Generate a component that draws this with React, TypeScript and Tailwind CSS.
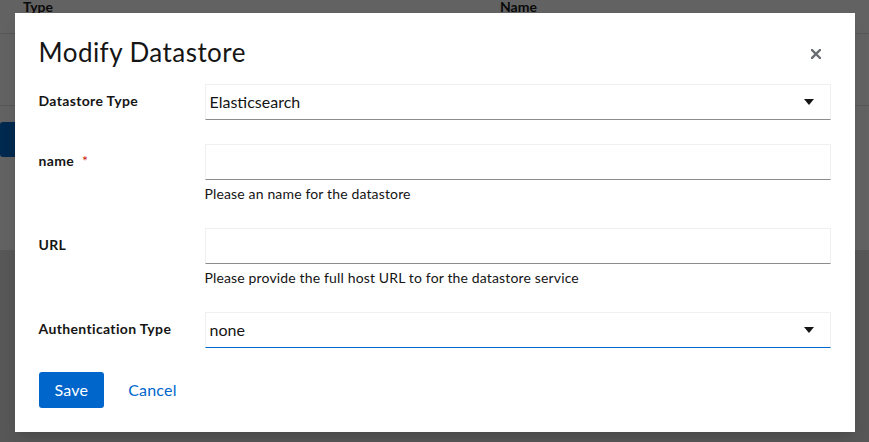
import React from "react";

const font = { fontFamily: "Lato, 'Noto Sans', sans-serif" };

function Caret() {
  return (
    <svg width="10" height="6" viewBox="0 0 10 6" className="shrink-0">
      <path d="M0 0 H10 L5 6 Z" fill="#151515" />
    </svg>
  );
}

function SelectBox({ value, focused }: { value: string; focused?: boolean }) {
  return (
    <div
      className={`flex h-9 items-center justify-between border border-[#f0f0f0] pl-[4px] pr-[16px] ${
        focused ? "border-b-[#0066cc]" : "border-b-[#8a8d90]"
      }`}
    >
      <span className="text-base text-[#151515]">{value}</span>
      <Caret />
    </div>
  );
}

function TextBox() {
  return <div className="h-9 border border-[#f0f0f0] border-b-[#8a8d90]" />;
}

function Row({
  label,
  required,
  helper,
  children,
}: {
  label: string;
  required?: boolean;
  helper?: string;
  children: React.ReactNode;
}) {
  return (
    <div className="grid grid-cols-[166px_1fr]">
      <div className="pt-[6px] text-sm font-bold leading-[21px] tracking-[0.35px] text-[#151515]">
        {label}
        {required && <span className="ml-[8px] font-normal text-[#c9190b]">*</span>}
      </div>
      <div>
        {children}
        {helper && (
          <p className="mt-1 text-sm leading-5 tracking-[0.15px] text-[#151515]">{helper}</p>
        )}
      </div>
    </div>
  );
}

export default function App() {
  return (
    <div className="relative h-[442px] w-full overflow-hidden bg-[#575757]" style={font}>
      {/* dimmed page behind the modal */}
      <div className="bg-[#626262]">
        <div className="flex h-[34px] border-b border-[#575757] text-sm font-bold text-[#0a0a0a]">
          <span className="-mt-[3px] ml-[23px] w-[477px]">Type</span>
          <span className="-mt-[3px]">Name</span>
        </div>
        <div className="h-[72px] border-b border-[#575757]" />
        <div className="h-[145px] border-b border-[#575757] pt-[16px]">
          <div className="h-[35px] w-[40px] rounded-[3px] bg-[#00294f]" />
        </div>
      </div>

      {/* modal */}
      <div className="absolute inset-0 flex justify-center pt-[13px]">
        <div className="h-[419px] w-[840px] bg-white px-6 pt-6 shadow-lg">
          <div className="flex items-start justify-between">
            <h1 className="text-[26px] leading-[31px] tracking-[0.45px] text-[#151515]">Modify Datastore</h1>
            <button className="mr-[10px] mt-[12px]">
              <svg width="10" height="10" viewBox="0 0 10 10">
                <path d="M1 1 L9 9 M9 1 L1 9" stroke="#6a6e73" strokeWidth="2.4" strokeLinecap="square" />
              </svg>
            </button>
          </div>

          <div className="mt-4 flex flex-col gap-6">
            <Row label="Datastore Type">
              <SelectBox value="Elasticsearch" />
            </Row>
            <Row label="name" required helper="Please an name for the datastore">
              <TextBox />
            </Row>
            <Row label="URL" helper="Please provide the full host URL to for the datastore service">
              <TextBox />
            </Row>
            <Row label="Authentication Type">
              <SelectBox value="none" focused />
            </Row>
            <div className="flex items-center gap-6">
              <button className="h-9 rounded-[3px] bg-[#0066cc] px-4 text-base tracking-[0.2px] text-white">Save</button>
              <button className="text-base tracking-[0.2px] text-[#0066cc]">Cancel</button>
            </div>
          </div>
        </div>
      </div>
    </div>
  );
}
